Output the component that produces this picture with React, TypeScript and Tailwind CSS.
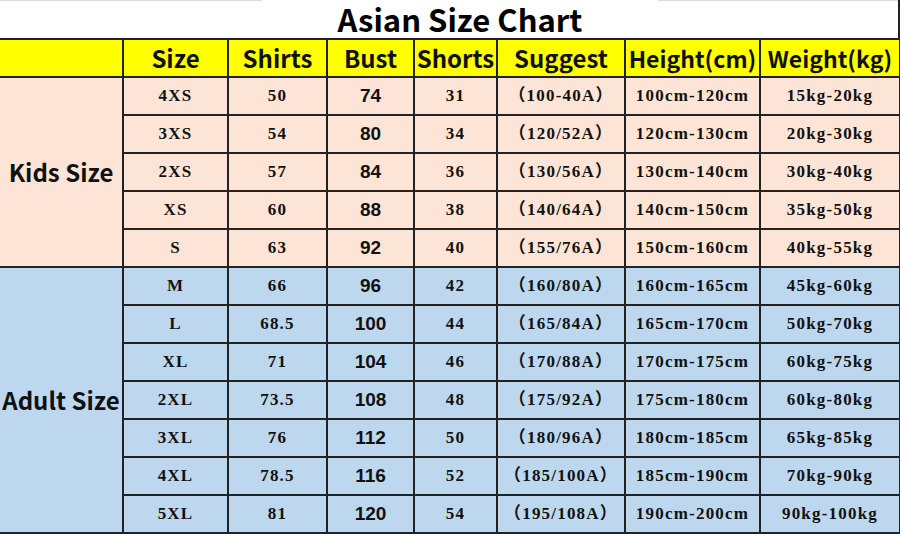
import React from "react";

type Row = {
  size: string;
  shirts: string;
  bust: string;
  shorts: string;
  suggest: string;
  height: string;
  weight: string;
};

const kids: Row[] = [
  { size: "4XS", shirts: "50", bust: "74", shorts: "31", suggest: "（100-40A）", height: "100cm-120cm", weight: "15kg-20kg" },
  { size: "3XS", shirts: "54", bust: "80", shorts: "34", suggest: "（120/52A）", height: "120cm-130cm", weight: "20kg-30kg" },
  { size: "2XS", shirts: "57", bust: "84", shorts: "36", suggest: "（130/56A）", height: "130cm-140cm", weight: "30kg-40kg" },
  { size: "XS", shirts: "60", bust: "88", shorts: "38", suggest: "（140/64A）", height: "140cm-150cm", weight: "35kg-50kg" },
  { size: "S", shirts: "63", bust: "92", shorts: "40", suggest: "（155/76A）", height: "150cm-160cm", weight: "40kg-55kg" },
];

const adults: Row[] = [
  { size: "M", shirts: "66", bust: "96", shorts: "42", suggest: "（160/80A）", height: "160cm-165cm", weight: "45kg-60kg" },
  { size: "L", shirts: "68.5", bust: "100", shorts: "44", suggest: "（165/84A）", height: "165cm-170cm", weight: "50kg-70kg" },
  { size: "XL", shirts: "71", bust: "104", shorts: "46", suggest: "（170/88A）", height: "170cm-175cm", weight: "60kg-75kg" },
  { size: "2XL", shirts: "73.5", bust: "108", shorts: "48", suggest: "（175/92A）", height: "175cm-180cm", weight: "60kg-80kg" },
  { size: "3XL", shirts: "76", bust: "112", shorts: "50", suggest: "（180/96A）", height: "180cm-185cm", weight: "65kg-85kg" },
  { size: "4XL", shirts: "78.5", bust: "116", shorts: "52", suggest: "（185/100A）", height: "185cm-190cm", weight: "70kg-90kg" },
  { size: "5XL", shirts: "81", bust: "120", shorts: "54", suggest: "（195/108A）", height: "190cm-200cm", weight: "90kg-100kg" },
];

const headers = ["Size", "Shirts", "Bust", "Shorts", "Suggest", "Height(cm)", "Weight(kg)"];

const sans = "font-['Noto_Sans_CJK_SC','Noto_Sans',sans-serif]";
const serif = "font-['Liberation_Serif','Noto_Sans_CJK_SC',serif] font-bold text-[17px] tracking-[1.2px]";
const cell = "border-2 border-[#222] text-center align-middle text-[#111]";

function Group({ label, rows, bg }: { label: string; rows: Row[]; bg: string }) {
  return (
    <>
      {rows.map((r, i) => (
        <tr key={r.size} className={`h-[38px] ${bg}`}>
          {i === 0 && (
            <td
              rowSpan={rows.length}
              className={`border-2 border-l-0 border-[#222] text-center align-middle text-[24px] font-bold text-[#111] whitespace-nowrap ${sans}`}
            >
              {label}
            </td>
          )}
          <td className={`${cell} ${serif}`}>{r.size}</td>
          <td className={`${cell} ${serif}`}>{r.shirts}</td>
          <td className={`${cell} font-['Liberation_Sans',sans-serif] font-bold text-[19px]`}>{r.bust}</td>
          <td className={`${cell} ${serif}`}>{r.shorts}</td>
          <td className={`${cell} ${serif}`}>{r.suggest}</td>
          <td className={`${cell} ${serif}`}>{r.height}</td>
          <td className={`${cell} ${serif}`}>{r.weight}</td>
        </tr>
      ))}
    </>
  );
}

export default function App() {
  return (
    <div className="w-[900px] bg-white">
      {/* title strip */}
      <div className="flex h-[38px] border-r-2 border-[#222]">
        <div className="w-[262px] border-t border-[#d8dbe4]" />
        <div className={`flex-1 flex items-center justify-center text-[31px] font-bold text-black leading-[36px] ${sans}`}>
          Asian Size Chart
        </div>
        <div className="w-[240px] border-t border-[#d8dbe4]" />
      </div>

      <table className="w-[900px] table-fixed border-collapse">
        <colgroup>
          <col className="w-[123px]" />
          <col className="w-[105px]" />
          <col className="w-[99px]" />
          <col className="w-[87px]" />
          <col className="w-[83px]" />
          <col className="w-[128px]" />
          <col className="w-[135px]" />
          <col className="w-[140px]" />
        </colgroup>
        <thead>
          <tr className="h-[38px] bg-[#ffff00]">
            <th className="border-2 border-l-0 border-[#222]" />
            {headers.map((h) => (
              <th
                key={h}
                className={`${cell} font-bold leading-none whitespace-nowrap ${sans} ${
                  h.includes("(") ? "text-[23px]" : "text-[24px]"
                }`}
              >
                {h}
              </th>
            ))}
          </tr>
        </thead>
        <tbody>
          <Group label="Kids Size" rows={kids} bg="bg-[#fce4d6]" />
          <Group label="Adult Size" rows={adults} bg="bg-[#bdd7ee]" />
        </tbody>
      </table>
    </div>
  );
}
